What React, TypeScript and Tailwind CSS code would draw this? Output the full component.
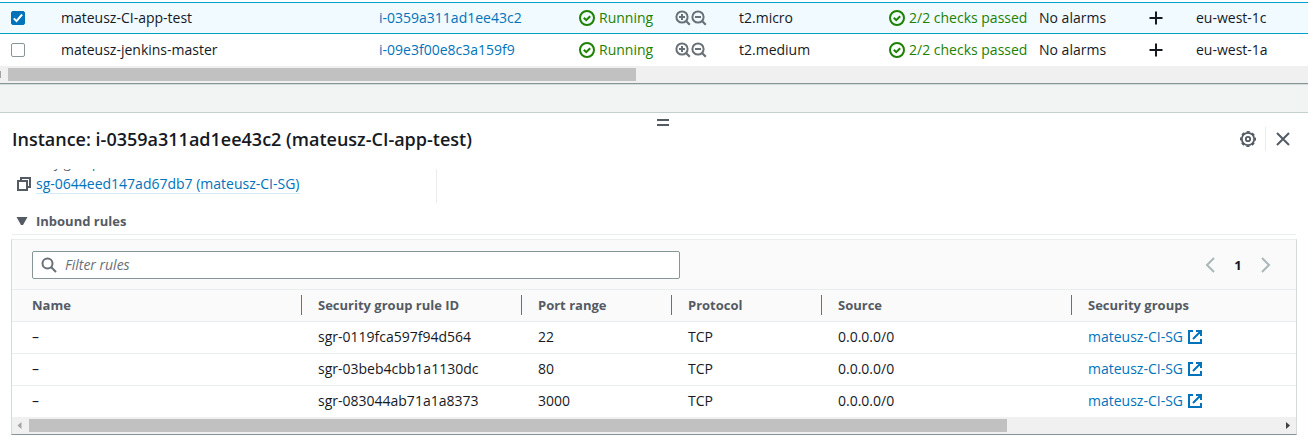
import type { ReactNode } from "react";

type Instance = {
  name: string;
  id: string;
  type: string;
  zone: string;
  selected: boolean;
};

const instances: Instance[] = [
  { name: "mateusz-CI-app-test", id: "i-0359a311ad1ee43c2", type: "t2.micro", zone: "eu-west-1c", selected: true },
  { name: "mateusz-jenkins-master", id: "i-09e3f00e8c3a159f9", type: "t2.medium", zone: "eu-west-1a", selected: false },
];

const rules = [
  { id: "sgr-0119fca597f94d564", port: "22" },
  { id: "sgr-03beb4cbb1a1130dc", port: "80" },
  { id: "sgr-083044ab71a1a8373", port: "3000" },
];

const headings = ["Name", "Security group rule ID", "Port range", "Protocol", "Source", "Security groups"];

function Icon({ children }: { children: ReactNode }) {
  return (
    <svg
      viewBox="0 0 16 16"
      className="h-4 w-4 shrink-0"
      fill="none"
      stroke="currentColor"
      strokeWidth="2"
      aria-hidden="true"
    >
      {children}
    </svg>
  );
}

function CheckCircle() {
  return (
    <Icon>
      <circle cx="8" cy="8" r="7" />
      <path d="M4.8 7.8 7.2 10.2 11.2 6.2" />
    </Icon>
  );
}

function Magnifier({ plus }: { plus: boolean }) {
  return (
    <Icon>
      <circle cx="7" cy="7" r="5.6" strokeWidth="2" />
      <path d="m11 11 3.8 3.8" strokeWidth="2.2" />
      <path d={plus ? "M4 7h6M7 4v6" : "M4 7h6"} strokeWidth="2" />
    </Icon>
  );
}

function ScrollArrow({ left }: { left: boolean }) {
  return (
    <svg viewBox="0 0 17 17" className={left ? "w-[17px] shrink-0 text-[#a3a3a3]" : "w-[17px] shrink-0 text-[#404040]"} aria-hidden="true">
      <path d={left ? "M9.5 5v7L5.500 8.500z" : "M7 5v7l4-3.500z"} fill="currentColor" />
    </svg>
  );
}

function InstanceTable() {
  return (
    <table className="w-full table-fixed border-collapse whitespace-nowrap">
      <colgroup>
        <col className="w-[45px]" />
        <col className="w-[318px]" />
        <col className="w-[200px]" />
        <col className="w-[160px]" />
        <col className="w-[150px]" />
        <col className="w-[150px]" />
        <col className="w-[157px]" />
        <col />
      </colgroup>
      <tbody>
        {instances.map((row) => (
          <tr key={row.id} className={row.selected ? "h-[31px] border-y border-[#00a1c9] bg-[#f1faff]" : "h-8 bg-white"}>
            <td className="pl-[11px]">
              <label className="relative block h-3.5 w-3.5">
                <input
                  type="checkbox"
                  defaultChecked={row.selected}
                  aria-label={`Select ${row.name}`}
                  className="peer block h-3.5 w-3.5 appearance-none rounded-xs border border-[#879596] bg-white checked:border-[#0073bb] checked:bg-[#0073bb]"
                />
                <svg viewBox="0 0 14 14" className="pointer-events-none absolute inset-0 hidden peer-checked:block" aria-hidden="true">
                  <path d="m2.800 7.400 2.700 2.700 5.600-6.600" fill="none" stroke="white" strokeWidth="2" />
                </svg>
              </label>
            </td>
            <td className="pl-4">{row.name}</td>
            <td className="pl-4">
              <a href="#instance" className="text-[#0073bb]">{row.id}</a>
            </td>
            <td className="pl-4">
              <div className="flex items-center">
                <span className="flex w-24 items-center gap-1 text-[#1d8102]">
                  <CheckCircle />
                  Running
                </span>
                <button type="button" aria-label="Add filter" className="text-[#687078]"><Magnifier plus /></button>
                <button type="button" aria-label="Remove filter" className="text-[#687078]"><Magnifier plus={false} /></button>
              </div>
            </td>
            <td className="pl-4">{row.type}</td>
            <td className="pl-4">
              <span className="flex items-center gap-1 text-[#1d8102]">
                <CheckCircle />
                2/2 checks passed
              </span>
            </td>
            <td className="pl-4">
              <div className="flex items-center justify-between pr-4">
                No alarms
                <button type="button" aria-label="Create alarm" className="text-[#16191f]">
                  <Icon><path d="M8 1.500v13M1.500 8h13" /></Icon>
                </button>
              </div>
            </td>
            <td className="pl-4">{row.zone}</td>
          </tr>
        ))}
      </tbody>
    </table>
  );
}

function RulesTable() {
  return (
    <table className="w-full table-fixed border-collapse whitespace-nowrap text-left">
      <colgroup>
        <col className="w-[290px]" />
        <col className="w-[220px]" />
        <col className="w-[150px]" />
        <col className="w-[150px]" />
        <col className="w-[250px]" />
        <col />
      </colgroup>
      <thead>
        <tr className="h-8 border-y border-[#eaeded] bg-[#fafafa] text-[13px] text-[#545b64]">
          {headings.map((heading, i) => (
            <th key={heading} className="p-0 font-bold">
              <div className={`h-5 leading-5 ${i === 0 ? "pl-5" : "pl-4"} ${i < 5 ? "border-r border-[#687078]" : ""}`}>
                {heading}
              </div>
            </th>
          ))}
        </tr>
      </thead>
      <tbody>
        {rules.map((rule) => (
          <tr key={rule.id} className="h-8 border-b border-[#eaeded] last:border-b-0">
            <td className="pl-5">–</td>
            <td className="pl-4">{rule.id}</td>
            <td className="pl-4">{rule.port}</td>
            <td className="pl-4">TCP</td>
            <td className="pl-4">0.0.0.0/0</td>
            <td className="pl-4">
              <a href="#group" className="flex items-center gap-1 text-[#0073bb]">
                mateusz-CI-SG
                <Icon>
                  <path d="M6 2H2v12h12v-4M9 2h5v5M14 2 6 10" />
                </Icon>
              </a>
            </td>
          </tr>
        ))}
      </tbody>
    </table>
  );
}

export default function App() {
  return (
    <main className="min-h-screen bg-white font-['Open_Sans','Noto_Sans',sans-serif] text-[14px] leading-5 text-[#16191f]">
      <section className="border-b border-[#879596] pt-0.5">
        <InstanceTable />
        <div className="flex h-[17px] items-center bg-[#f0f0f0]">
          <div className="h-[7px] w-px bg-[#a3a3a3]" />
          <div className="ml-[7px] h-[13px] w-[48%] bg-[#c1c1c1]" />
        </div>
      </section>
      <div className="h-7 border-t border-[#d5dbdb] bg-[#f2f3f3]" />

      <section className="border-t border-[#c3cfcf]">
        <div className="flex justify-center pt-1.5 pl-[17px]">
          <button type="button" aria-label="Resize panel" className="h-[7px] w-3 border-y-2 border-[#545b64]" />
        </div>
        <header className="flex h-[26px] items-center pr-[17px] pl-3">
          <h2 className="grow text-[18px] leading-6 font-semibold">Instance: i-0359a311ad1ee43c2 (mateusz-CI-app-test)</h2>
          <button type="button" aria-label="Preferences" className="pr-[9px] text-[#545b64]">
            <Icon>
              <circle cx="8" cy="8" r="6.200" strokeWidth="1.800" />
              <circle cx="8" cy="8" r="7.300" strokeWidth="1.400" strokeDasharray="3.200 2.533" strokeDashoffset="1.600" />
              <circle cx="8" cy="8" r="2.200" strokeWidth="1.800" />
            </Icon>
          </button>
          <button type="button" aria-label="Close" className="flex h-6 items-center border-l border-[#eaeded] pl-[9px] text-[#545b64]">
            <Icon><path d="m2 2 12 12M14 2 2 14" /></Icon>
          </button>
        </header>

        <div className="mt-[17px] flex">
          <div className="h-[34px] w-[437px] border-r border-[#eaeded] pl-3">
            <div className="flex h-0.5 items-end overflow-hidden text-[13px] text-[#545b64]">
              <span className="leading-4">Security groups</span>
            </div>
            <div className="flex items-center gap-1 pt-1 pl-1">
              <button type="button" aria-label="Copy" className="text-[#545b64]">
                <Icon><path d="M2 5h9v9H2zM5 5V2h9v9h-3" /></Icon>
              </button>
              <a href="#security-group" className="border-b border-[#d5ebf7] leading-[18px] text-[#0073bb]">sg-0644eed147ad67db7 (mateusz-CI-SG)</a>
            </div>
          </div>
        </div>

        <h3 className="mx-3 border-b border-[#eaeded] pt-2 pb-[3px]">
          <button type="button" className="flex items-center gap-2 pl-1 text-[13px] leading-5 font-bold text-[#545b64]">
            <svg viewBox="0 0 12 12" className="h-3 w-3" aria-hidden="true">
              <path d="M.5 2h11L7 10H5z" fill="currentColor" />
            </svg>
            Inbound rules
          </button>
        </h3>

        <div className="mx-[11px] mt-1 border border-t-[#eaeded] border-r-[#d5dbdb] border-b-[#879596] border-l-[#d5dbdb]">
          <div className="flex items-center justify-between bg-[#fafafa] px-5 pt-[11px] pb-2.5">
            <label className="flex h-7 w-1/2 max-w-[648px] grow items-center gap-2 rounded-xs border border-[#879596] bg-white px-2 text-[#687078]">
              <Icon>
                <circle cx="6.500" cy="6.500" r="5" />
                <path d="m10 10 5 5" />
              </Icon>
              <input type="text" placeholder="Filter rules" aria-label="Filter rules" className="min-w-0 grow bg-transparent italic outline-none placeholder:text-[#687078]" />
            </label>
            <nav aria-label="Pages" className="flex items-center gap-[11px] pr-[3px] text-[#aab7b8]">
              <button type="button" aria-label="Previous page"><Icon><path d="m11 1-7 7 7 7" /></Icon></button>
              <span className="w-4 text-center text-[13px] font-bold text-[#16191f]">1</span>
              <button type="button" aria-label="Next page"><Icon><path d="m5 1 7 7-7 7" /></Icon></button>
            </nav>
          </div>
          <RulesTable />
          <div className="flex h-[17px] items-center bg-[#f0f0f0]">
            <ScrollArrow left />
            <div className="grow">
              <div className="h-[13px] w-[78.2%] bg-[#c1c1c1]" />
            </div>
            <ScrollArrow left={false} />
          </div>
        </div>
      </section>
    </main>
  );
}
